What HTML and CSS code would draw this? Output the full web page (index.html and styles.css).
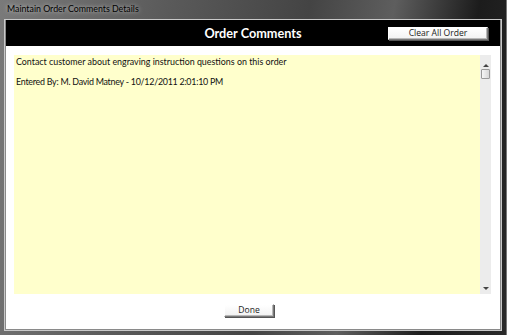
FILE: index.html
```html
<!DOCTYPE html>
<html lang="en">
<head>
  <meta charset="UTF-8">
  <title>Maintain Order Comments Details</title>
  <link rel="stylesheet" href="styles.css">
</head>
<body>
  <div class="window">
    <div class="titlebar">Maintain Order Comments Details</div>
    <div class="client">
      <div class="header">
        <span></span>
        <h1>Order Comments</h1>
        <button class="btn clear-btn">Clear All Order</button>
      </div>
      <div class="comments">
        <div class="comment-text">
          <p>Contact customer about engraving instruction questions on this order</p>
          <p class="entered">Entered By: M. David Matney - 10/12/2011 2:01:10 PM</p>
        </div>
        <div class="scrollbar">
          <div class="arrow up"></div>
          <div class="thumb"></div>
          <div class="track"></div>
          <div class="arrow down"></div>
        </div>
      </div>
      <div class="footer">
        <button class="btn done-btn">Done</button>
      </div>
    </div>
  </div>
</body>
</html>
```

FILE: styles.css
```css
html, body {
  margin: 0;
  padding: 0;
  background: #1a1a1a;
}
.window {
  width: 507px;
  height: 335px;
  box-sizing: border-box;
  padding: 0 5px 5px 5px;
  display: flex;
  flex-direction: column;
  background: linear-gradient(100deg, #7a7a7a 0%, #5a5a5a 30%, #444 55%, #5e5e5e 70%, #1c1c1c 85%, #2a2a2a 100%);
  border-right: 1px solid #777;
}
.titlebar {
  height: 20px;
  line-height: 17px;
  padding-left: 2px;
  font-family: Lato, sans-serif;
  font-size: 8.8px;
  color: #000;
  text-shadow: 0 0 4px rgba(255, 255, 255, 0.7);
}
.client {
  flex: 1;
  background: #fff;
  display: flex;
  flex-direction: column;
  border: 1px solid #8a8a8a;
  border-top: none;
  box-shadow: 0 0 0 1px #c9c9c9;
}
.header {
  height: 26px;
  background: #000;
  display: grid;
  grid-template-columns: 1fr auto 1fr;
  align-items: center;
}
.header h1 {
  margin: 0;
  color: #fff;
  font-family: Lato, sans-serif;
  font-weight: 700;
  font-size: 12.7px;
}
.btn {
  font-family: "Open Sans", sans-serif;
  font-size: 8.6px;
  color: #222;
  background: linear-gradient(#ffffff, #f2f2f2);
  border: 1px solid #fff;
  border-right-color: #7a7a7a;
  border-bottom-color: #7a7a7a;
  box-shadow: inset -1px -1px 0 #b8b8b8, 1px 1px 0 #555;
  padding: 0;
  cursor: pointer;
}
.clear-btn {
  justify-self: end;
  margin-right: 12px;
  width: 100px;
  height: 13px;
  line-height: 11px;
}
.comments {
  margin: 9px 9px 0 8px;
  height: 239px;
  display: flex;
}
.comment-text {
  flex: 1;
  background: #ffffcc;
  padding: 1px 2px;
  font-family: Lato, sans-serif;
  font-size: 8.9px;
  color: #111;
}
.comment-text p {
  margin: 0 0 9px 0;
  line-height: 11px;
}
.comment-text .entered {
  letter-spacing: -0.25px;
}
.scrollbar {
  width: 11px;
  background: #ececec;
  display: flex;
  flex-direction: column;
  align-items: center;
}
.arrow {
  width: 0;
  height: 0;
  border-left: 3px solid transparent;
  border-right: 3px solid transparent;
}
.arrow.up {
  margin-top: 9px;
  border-bottom: 3px solid #444;
}
.arrow.down {
  margin-bottom: 4px;
  border-top: 3px solid #444;
}
.thumb {
  margin-top: 2px;
  width: 9px;
  height: 10px;
  box-sizing: border-box;
  background: linear-gradient(90deg, #f6f6f6, #d8d8d8);
  border: 1px solid #9a9a9a;
  border-radius: 1px;
}
.track {
  flex: 1;
}
.footer {
  flex: 1;
  display: flex;
  justify-content: center;
  align-items: flex-start;
  padding-top: 10px;
  padding-right: 8px;
}
.done-btn {
  width: 50px;
  height: 13px;
  line-height: 11px;
}
```
